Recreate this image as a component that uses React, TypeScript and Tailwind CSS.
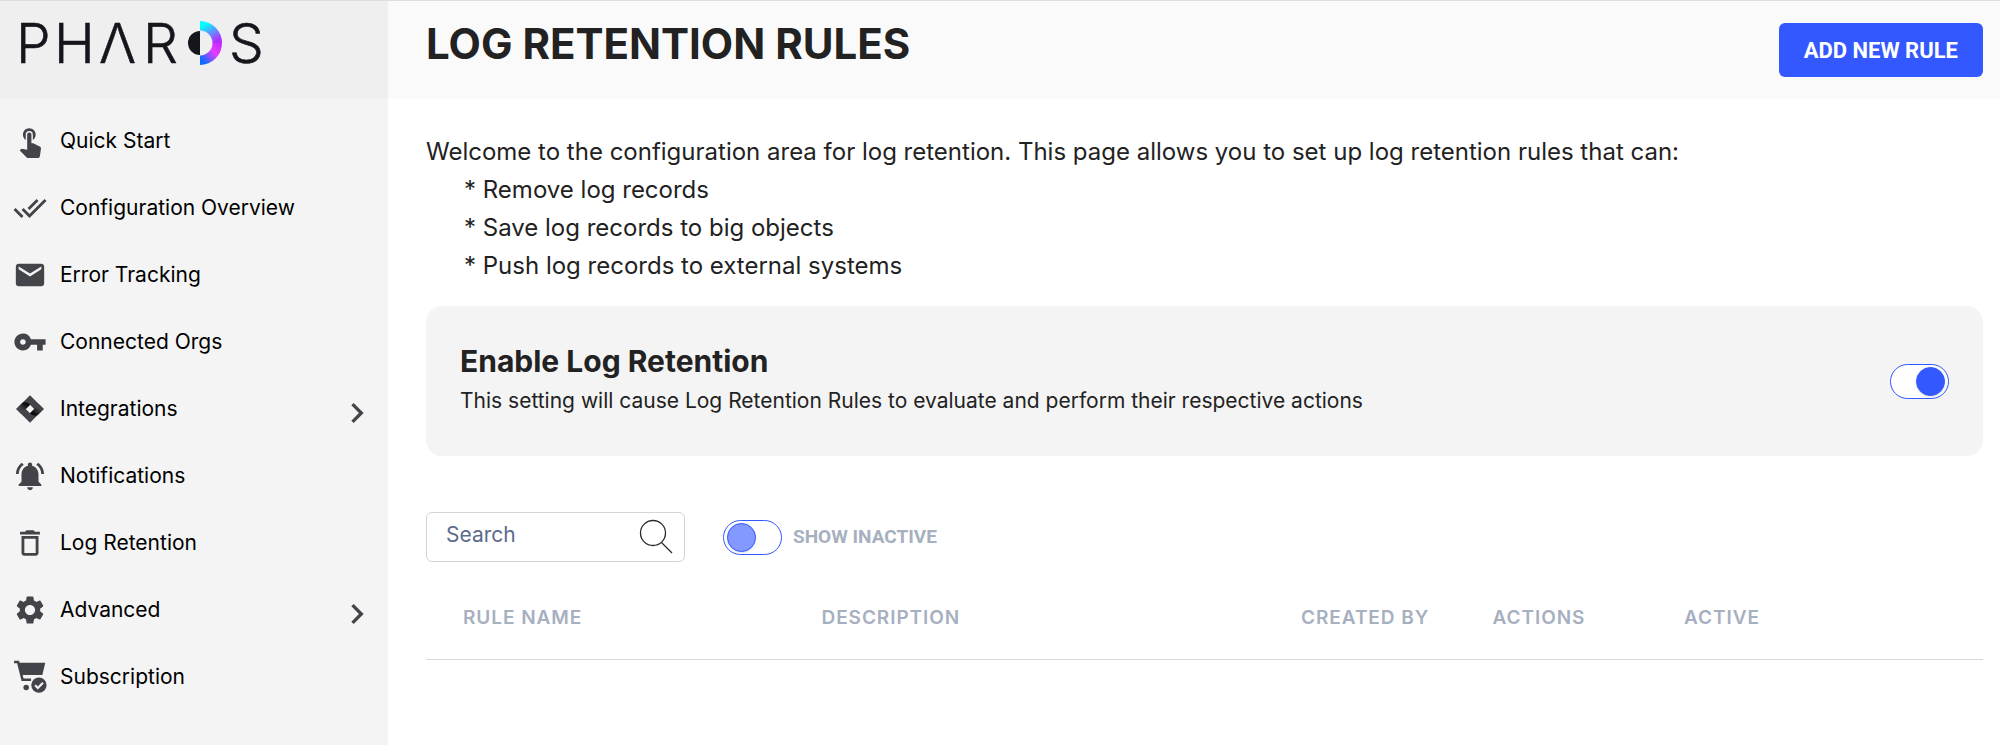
import React, { useState } from 'react';
import {
  MdChevronRight,
  MdDeleteOutline,
  MdDoneAll,
  MdEmail,
  MdNotificationsActive,
  MdSettings,
  MdTouchApp,
  MdVpnKey,
} from 'react-icons/md';

interface IconProps {
  className?: string;
}

interface NavItem {
  label: string;
  icon: React.ComponentType<IconProps>;
  expandable?: boolean;
}

const IntegrationsIcon: React.FC<IconProps> = ({ className }) => (
  <svg viewBox="0 0 32 32" className={className} aria-hidden="true">
    <defs>
      <linearGradient id="fold-left" gradientUnits="userSpaceOnUse" x1="5" y1="19" x2="13" y2="10">
        <stop offset="0.3" stopColor="#43434a" />
        <stop offset="1" stopColor="#000000" />
      </linearGradient>
      <linearGradient id="fold-right" gradientUnits="userSpaceOnUse" x1="27" y1="13" x2="19" y2="22">
        <stop offset="0.3" stopColor="#43434a" />
        <stop offset="1" stopColor="#000000" />
      </linearGradient>
    </defs>
    <path d="M16 3 29 16 16 29 3 16ZM16 12 12 16 16 20 20 16Z" fill="currentColor" fillRule="evenodd" />
    <path d="M8 11c2.500-2.500 5.500-1 8 1L12 16l-4.500 4.500L3 16Z" fill="url(#fold-left)" />
    <path d="M24 21c-2.500 2.500-5.500 1-8-1L20 16l4.500-4.500L29 16Z" fill="url(#fold-right)" />
  </svg>
);

const SubscriptionIcon: React.FC<IconProps> = ({ className }) => (
  <svg viewBox="0 0 32 32" className={className} aria-hidden="true">
    <path d="M1 1.800h3.800L9 18.600h8" fill="none" stroke="currentColor" strokeWidth="2.400" />
    <path d="M4.600 2.600h25.800l-2.800 11.600H7.600Z" fill="currentColor" />
    <circle cx="12.400" cy="25.800" r="2.600" fill="currentColor" />
    <circle cx="24.400" cy="23.600" r="8.400" fill="#f4f4f4" />
    <circle cx="24.400" cy="23.600" r="7.200" fill="currentColor" />
    <path d="m20.800 23.800 2.600 2.600 4.800-5" fill="none" stroke="#f4f4f4" strokeWidth="2" />
  </svg>
);

const NAV_ITEMS: NavItem[] = [
  { label: 'Quick Start', icon: MdTouchApp },
  { label: 'Configuration Overview', icon: MdDoneAll },
  { label: 'Error Tracking', icon: MdEmail },
  { label: 'Connected Orgs', icon: MdVpnKey },
  { label: 'Integrations', icon: IntegrationsIcon, expandable: true },
  { label: 'Notifications', icon: MdNotificationsActive },
  { label: 'Log Retention', icon: MdDeleteOutline },
  { label: 'Advanced', icon: MdSettings, expandable: true },
  { label: 'Subscription', icon: SubscriptionIcon },
];

const Logo: React.FC = () => (
  <svg viewBox="0 -16 264 80" className="h-20 w-[264px]" role="img" aria-label="Pharos">
    <defs>
      <linearGradient id="beam-top" x1="0" y1="0" x2="0.6" y2="1">
        <stop offset="0.2" stopColor="#00ffff" />
        <stop offset="1" stopColor="#b52cff" />
      </linearGradient>
      <linearGradient id="beam-bottom" x1="1" y1="0" x2="0" y2="0.9">
        <stop offset="0.1" stopColor="#c72bff" />
        <stop offset="0.4" stopColor="#e83cff" />
        <stop offset="0.9" stopColor="#0a6cff" />
      </linearGradient>
    </defs>
    <text
      x="4 42 87 131 217"
      y="42"
      fill="#15161c"
      stroke="#15161c"
      strokeWidth="0.6"
      className="font-['Inter'] text-[55px] font-light"
    >
      PHΛRS
    </text>
    <path d="M188 10a12 12 0 0 0 0 24Z" fill="#15161c" />
    <path d="M188 0a22 22 0 0 1 22 22h-9.500a12.500 12.500 0 0 0-12.500-12.500Z" fill="url(#beam-top)" />
    <path d="M210 22a22 22 0 0 1-22 22v-9.500a12.500 12.500 0 0 0 12.500-12.500Z" fill="url(#beam-bottom)" />
  </svg>
);

interface ToggleProps {
  id: string;
  checked: boolean;
  onChange: (checked: boolean) => void;
  label?: string;
}

const Toggle: React.FC<ToggleProps> = ({ id, checked, onChange, label }) => (
  <span className="relative inline-flex shrink-0">
    <input
      id={id}
      type="checkbox"
      role="switch"
      aria-label={label}
      checked={checked}
      onChange={(e) => onChange(e.target.checked)}
      className="peer h-[35px] w-[59px] cursor-pointer appearance-none rounded-full border border-[#3358ff] bg-white"
    />
    <span className="pointer-events-none absolute top-[3px] left-1 size-[29px] rounded-full border border-[#3358ff] bg-[#8499ff] shadow peer-checked:right-1 peer-checked:left-auto peer-checked:bg-[#3358ff]" />
  </span>
);

const COLUMNS = [
  { label: 'RULE NAME', className: 'w-[25.4%] pl-[37px]' },
  { label: 'DESCRIPTION', className: 'w-[30.8%]' },
  { label: 'CREATED BY', className: 'w-[12.3%]' },
  { label: 'ACTIONS', className: 'w-[12.3%]' },
  { label: 'ACTIVE', className: 'w-[19.2%]' },
];

const App: React.FC = () => {
  const [retentionEnabled, setRetentionEnabled] = useState(true);
  const [showInactive, setShowInactive] = useState(false);
  const [search, setSearch] = useState('');

  return (
    <div className="flex min-h-screen border-t border-[#dddddd] bg-white font-['Inter',sans-serif] text-[#222222]">
      <aside className="w-[388px] shrink-0 bg-[#f4f4f4]">
        <div className="h-[98px] bg-[#efefef] px-3 pt-1">
          <Logo />
        </div>
        <nav className="pt-2">
          {NAV_ITEMS.map(({ label, icon: Icon, expandable }) => (
            <a key={label} href="#" className="flex h-[67px] items-center pr-[11px] pl-[13px] text-[21px] text-black">
              <Icon className="mr-[13px] size-[34px] text-[#43434a]" />
              {label}
              {expandable && <MdChevronRight className="mt-2 ml-auto size-10 text-[#43434a]" />}
            </a>
          ))}
        </nav>
      </aside>

      <main className="min-w-0 flex-1">
        <header className="flex h-[98px] items-center justify-between bg-[#fafafa] pr-[17px] pl-[38px]">
          <h1 className="pb-[14px] text-[42px] font-bold">LOG RETENTION RULES</h1>
          <button className="h-[54px] rounded-md bg-[#3358ff] px-[25px] font-['Roboto',sans-serif] text-[22px] font-bold text-white">
            ADD NEW RULE
          </button>
        </header>

        <div className="pt-[34px] pr-[17px] pl-[38px]">
          <p className="text-2xl leading-[38px]">
            Welcome to the configuration area for log retention. This page allows you to set up log retention rules that can:
          </p>
          <ul className="pl-[38px] text-2xl leading-[38px]">
            <li>* Remove log records</li>
            <li>* Save log records to big objects</li>
            <li>* Push log records to external systems</li>
          </ul>

          <section className="mt-[21px] flex h-[150px] items-center justify-between rounded-2xl bg-[#f4f4f4] px-[34px]">
            <div>
              <h2 className="text-3xl leading-10 font-bold">Enable Log Retention</h2>
              <p className="text-[21px] leading-10">
                This setting will cause Log Retention Rules to evaluate and perform their respective actions
              </p>
            </div>
            <Toggle
              id="enable-retention"
              label="Enable Log Retention"
              checked={retentionEnabled}
              onChange={setRetentionEnabled}
            />
          </section>

          <div className="mt-14 flex items-center">
            <div className="relative w-[259px]">
              <input
                type="search"
                aria-label="Search"
                placeholder="Search"
                value={search}
                onChange={(e) => setSearch(e.target.value)}
                className="h-[50px] w-full rounded-md border border-[#d4d4d4] pr-12 pb-1.5 pl-[19px] text-[21px] outline-none placeholder:text-[#5d6a8a]"
              />
              <svg viewBox="0 0 36 36" className="pointer-events-none absolute top-[7px] right-[11px] size-9" aria-hidden="true">
                <circle cx="15" cy="14" r="12.500" fill="none" stroke="#2b2b2b" strokeWidth="1.300" />
                <path d="m23.500 23.500 10.500 10.500" stroke="#2b2b2b" strokeWidth="1.300" />
              </svg>
            </div>
            <div className="ml-[38px] flex items-center gap-[11px]">
              <Toggle id="show-inactive" checked={showInactive} onChange={setShowInactive} />
              <label htmlFor="show-inactive" className="font-['Roboto',sans-serif] text-[19px] font-bold text-[#a6b0c0]">
                SHOW INACTIVE
              </label>
            </div>
          </div>

          <table className="mt-[22px] w-full table-fixed border-b border-[#d8d8d8]">
            <thead>
              <tr className="h-[75px] text-left text-[19px] tracking-wider text-[#a6b0c0]">
                {COLUMNS.map((col) => (
                  <th key={col.label} scope="col" className={`pb-1.5 font-semibold whitespace-nowrap ${col.className}`}>
                    {col.label}
                  </th>
                ))}
              </tr>
            </thead>
          </table>
        </div>
      </main>
    </div>
  );
};

export default App;
